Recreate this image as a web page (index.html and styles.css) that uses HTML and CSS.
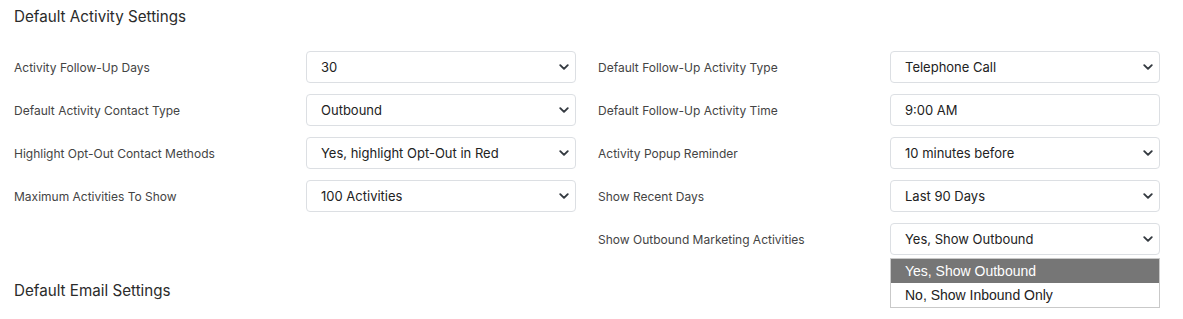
FILE: index.html
```html
<!DOCTYPE html>
<html>
<head>
<meta charset="utf-8">
<link rel="stylesheet" href="styles.css">
</head>
<body>
<section class="settings">
  <h2 class="section-title">Default Activity Settings</h2>
  <div class="grid">
    <div class="field">
      <label class="label">Activity Follow-Up Days</label>
      <div class="select"><span>30</span><svg class="chev" viewBox="0 0 16 16"><path d="M2 5l6 6 6-6"/></svg></div>
    </div>
    <div class="field">
      <label class="label">Default Follow-Up Activity Type</label>
      <div class="select"><span>Telephone Call</span><svg class="chev" viewBox="0 0 16 16"><path d="M2 5l6 6 6-6"/></svg></div>
    </div>
    <div class="field">
      <label class="label">Default Activity Contact Type</label>
      <div class="select"><span>Outbound</span><svg class="chev" viewBox="0 0 16 16"><path d="M2 5l6 6 6-6"/></svg></div>
    </div>
    <div class="field">
      <label class="label">Default Follow-Up Activity Time</label>
      <div class="select input"><span>9:00 AM</span></div>
    </div>
    <div class="field">
      <label class="label">Highlight Opt-Out Contact Methods</label>
      <div class="select"><span>Yes, highlight Opt-Out in Red</span><svg class="chev" viewBox="0 0 16 16"><path d="M2 5l6 6 6-6"/></svg></div>
    </div>
    <div class="field">
      <label class="label">Activity Popup Reminder</label>
      <div class="select"><span>10 minutes before</span><svg class="chev" viewBox="0 0 16 16"><path d="M2 5l6 6 6-6"/></svg></div>
    </div>
    <div class="field">
      <label class="label">Maximum Activities To Show</label>
      <div class="select"><span>100 Activities</span><svg class="chev" viewBox="0 0 16 16"><path d="M2 5l6 6 6-6"/></svg></div>
    </div>
    <div class="field">
      <label class="label">Show Recent Days</label>
      <div class="select"><span>Last 90 Days</span><svg class="chev" viewBox="0 0 16 16"><path d="M2 5l6 6 6-6"/></svg></div>
    </div>
    <div class="field empty"></div>
    <div class="field">
      <label class="label">Show Outbound Marketing Activities</label>
      <div class="select open"><span>Yes, Show Outbound</span><svg class="chev" viewBox="0 0 16 16"><path d="M2 5l6 6 6-6"/></svg>
        <ul class="menu">
          <li class="opt active">Yes, Show Outbound</li>
          <li class="opt">No, Show Inbound Only</li>
        </ul>
      </div>
    </div>
  </div>
</section>
<section class="settings email">
  <h2 class="section-title">Default Email Settings</h2>
</section>
</body>
</html>
```

FILE: styles.css
```css
html, body {
  margin: 0;
  padding: 0;
  background: #fff;
}
body {
  font-family: Inter, "Noto Sans", sans-serif;
  color: #333;
  padding: 0 23px 0 14px;
  min-height: 319px;
  box-sizing: border-box;
}
.section-title {
  margin: 0;
  font-size: 15.2px;
  font-weight: 400;
  color: #2b2b2b;
  line-height: 20px;
  padding-top: 7px;
}
.grid {
  display: grid;
  grid-template-columns: 1fr 1fr;
  column-gap: 22px;
  row-gap: 11px;
  margin-top: 24px;
}
.field {
  display: grid;
  grid-template-columns: 292px 270px;
  align-items: center;
  height: 32px;
}
.label {
  font-size: 12px;
  color: #444;
}
.select {
  position: relative;
  box-sizing: border-box;
  height: 32px;
  border: 1px solid #dcdfe3;
  border-radius: 4px;
  display: flex;
  align-items: center;
  padding: 0 6px 0 14px;
  font-size: 13px;
  color: #222;
}
.select span {
  flex: 1;
}
.chev {
  width: 10px;
  height: 10px;
  fill: none;
  stroke: #343a40;
  stroke-width: 3;
  stroke-linecap: round;
  stroke-linejoin: round;
}
.menu {
  position: absolute;
  left: -1px;
  right: -1px;
  top: calc(100% + 4px);
  margin: 0;
  padding: 0;
  list-style: none;
  border: 1px solid #c9c9c9;
  background: #fff;
  font-family: "Liberation Sans", Arial, sans-serif;
  font-size: 14px;
  z-index: 2;
}
.opt {
  height: 24px;
  line-height: 24px;
  padding-left: 14px;
  color: #222;
}
.opt.active {
  background: #767676;
  color: #fff;
}
.email {
  margin-top: 12px;
}
.email .section-title {
  padding-top: 14px;
}
```
